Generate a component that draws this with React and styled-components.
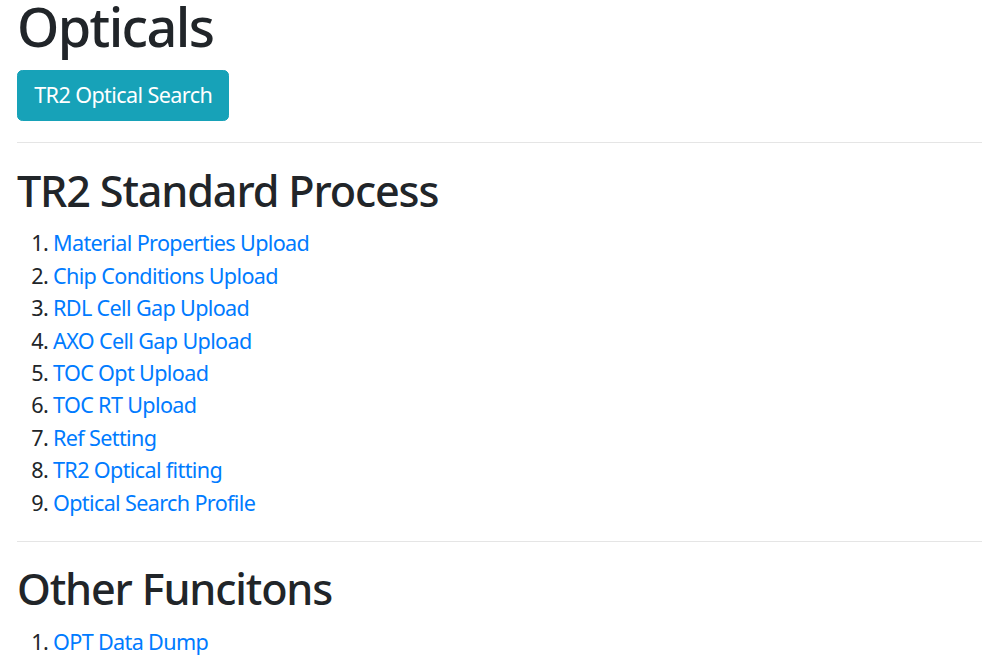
import styled, { createGlobalStyle } from "styled-components";

const GlobalStyle = createGlobalStyle`
  html, body {
    margin: 0;
    padding: 0;
    background: #fff;
  }
  body {
    font-family: "Noto Sans", "Open Sans", sans-serif;
    font-size: 21.6px;
    line-height: 1.5;
    color: #212529;
    overflow: hidden;
  }
`;

const Page = styled.div`
  padding: 0 0 0 17px;
`;

const Title = styled.h1`
  margin: -5.6px 0 10.8px;
  font-size: 54px;
  font-weight: 500;
  line-height: 1.2;
  letter-spacing: -0.03em;
`;

const Heading = styled.h2`
  margin: 0 0 10.8px;
  font-size: 43.2px;
  font-weight: 500;
  line-height: 1.2;
  letter-spacing: -0.027em;
`;

const InfoButton = styled.button`
  display: inline-block;
  padding: 8.1px 16.2px;
  font-family: inherit;
  font-size: 21.6px;
  line-height: 1.5;
  letter-spacing: -0.028em;
  color: #fff;
  background-color: #17a2b8;
  border: 1px solid #17a2b8;
  border-radius: 5.4px;
  cursor: pointer;
`;

const Rule = styled.hr`
  margin: 21.6px 0;
  border: 0;
  border-top: 1px solid rgba(0, 0, 0, 0.1);
`;

const List = styled.ol`
  margin: 0 0 21.6px;
  padding-left: 36px;
  letter-spacing: -0.03em;
`;

const Link = styled.a`
  color: #007bff;
  text-decoration: none;
`;

const standard = [
  "Material Properties Upload",
  "Chip Conditions Upload",
  "RDL Cell Gap Upload",
  "AXO Cell Gap Upload",
  "TOC Opt Upload",
  "TOC RT Upload",
  "Ref Setting",
  "TR2 Optical fitting",
  "Optical Search Profile",
];

const others = ["OPT Data Dump"];

export default function App() {
  return (
    <>
      <GlobalStyle />
      <Page>
        <Title>Opticals</Title>
        <InfoButton>TR2 Optical Search</InfoButton>
        <Rule />
        <Heading>TR2 Standard Process</Heading>
        <List>
          {standard.map((s) => (
            <li key={s}>
              <Link href="#">{s}</Link>
            </li>
          ))}
        </List>
        <Rule />
        <Heading>Other Funcitons</Heading>
        <List>
          {others.map((s) => (
            <li key={s}>
              <Link href="#">{s}</Link>
            </li>
          ))}
        </List>
      </Page>
    </>
  );
}
